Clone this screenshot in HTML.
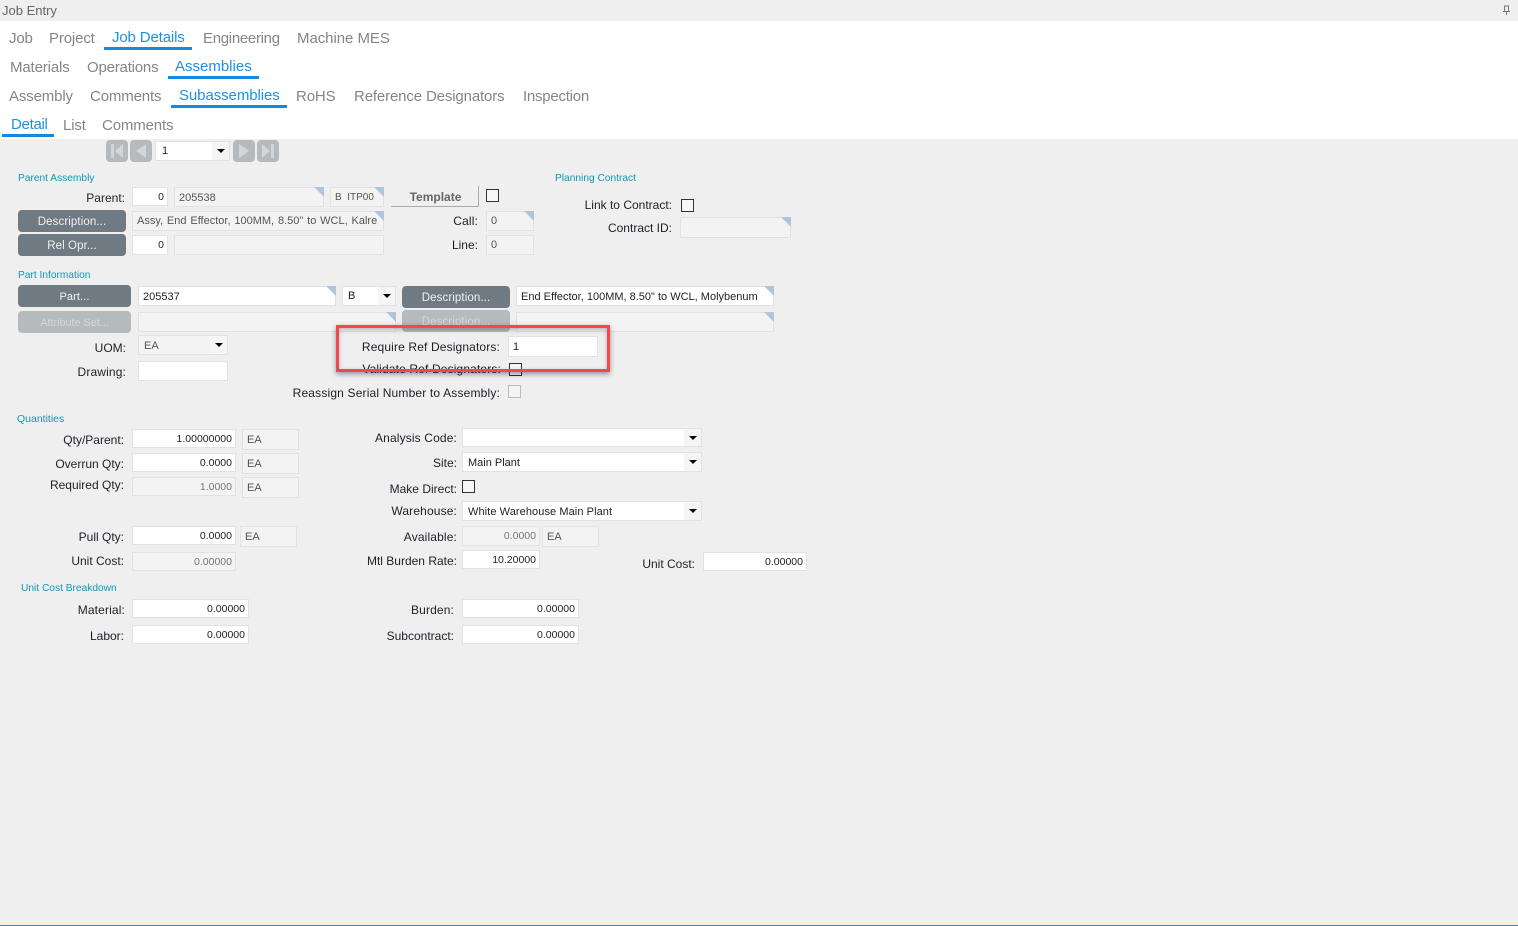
<!DOCTYPE html>
<html><head><meta charset="utf-8"><title>Job Entry</title>
<style>
html,body{margin:0;padding:0}
body{width:1518px;height:926px;position:relative;overflow:hidden;background:#efefef;font-family:"Liberation Sans",sans-serif;color:#222}
div,span{box-sizing:border-box}
.a{position:absolute}
.tab{position:absolute;font-size:15px;line-height:18px;color:#858585;white-space:nowrap;letter-spacing:-.14px}
.on{color:#1e90e4}
.u{position:absolute;height:3px;background:#1489e0}
.g{position:absolute;font-size:10.2px;line-height:12px;color:#1098b4;white-space:nowrap}
.l{position:absolute;font-size:12px;line-height:14px;color:#1e1e2a;white-space:nowrap;text-align:right}
.s{letter-spacing:.14px}
.f{position:absolute;background:#fff;border:1px solid #e2e2e2;font-size:11px;line-height:18px;padding:0 4px;color:#222;white-space:nowrap;overflow:hidden}
.d{background:#f3f3f3;color:#555}
.n{text-align:right;padding-right:3px;font-size:10.5px}
.c{overflow:visible}
.c::after{content:"";position:absolute;right:-1px;top:-1px;border-style:solid;border-width:0 10px 10px 0;border-color:transparent #b0c4de transparent transparent}
.b{position:absolute;background:#6f7a82;border-radius:4px;color:#f2f2f2;font-size:11.5px;letter-spacing:.1px;line-height:24px;text-align:center;white-space:nowrap}
.x{background:#b5babd;color:#d5d8da}
.k{position:absolute;width:13px;height:13px;border:1px solid #333;background:#f6f6f6}
.dd::before{content:"";position:absolute;right:0;top:0;bottom:0;width:17px;background:#f5f5f5}
.dd::after{content:"";position:absolute;right:4px;top:7px;border-style:solid;border-width:4px 4px 0 4px;border-color:#000 transparent transparent transparent}
.v{position:absolute;width:22px;height:22px;background:#b5babd;border-radius:4px}
</style></head><body>
<div class="a" style="left:0;top:21px;width:1518px;height:118px;background:#fff"></div>
<div class="a" style="left:2px;top:3px;font-size:13px;line-height:15px;color:#666">Job Entry</div>
<svg class="a" style="left:1502px;top:5px" width="9" height="11" viewBox="0 0 9 11"><path d="M2 1h5M2.5 1v5M6.5 1v5M1 6.5h7M4.5 6.5V10" stroke="#777" fill="none"/></svg>

<div class="tab" style="left:9px;top:30px">Job</div>
<div class="tab" style="left:49px;top:30px">Project</div>
<div class="tab on" style="left:112px;top:29px">Job Details</div>
<div class="u" style="left:104px;top:47px;width:88px"></div>
<div class="tab" style="left:203px;top:30px;letter-spacing:-.3px">Engineering</div>
<div class="tab" style="left:297px;top:30px;letter-spacing:-.05px">Machine MES</div>

<div class="tab" style="left:10px;top:59px">Materials</div>
<div class="tab" style="left:87px;top:59px;letter-spacing:-.2px">Operations</div>
<div class="tab on" style="left:175px;top:58px;letter-spacing:0">Assemblies</div>
<div class="u" style="left:168px;top:76px;width:91px"></div>

<div class="tab" style="left:9px;top:88px">Assembly</div>
<div class="tab" style="left:90px;top:88px">Comments</div>
<div class="tab on" style="left:179px;top:87px;letter-spacing:-.08px">Subassemblies</div>
<div class="u" style="left:171px;top:105px;width:116px"></div>
<div class="tab" style="left:296px;top:88px">RoHS</div>
<div class="tab" style="left:354px;top:88px">Reference Designators</div>
<div class="tab" style="left:523px;top:88px;letter-spacing:-.24px">Inspection</div>

<div class="tab on" style="left:11px;top:116px;letter-spacing:-.3px">Detail</div>
<div class="u" style="left:2px;top:134px;width:52px"></div>
<div class="tab" style="left:63px;top:117px">List</div>
<div class="tab" style="left:102px;top:117px">Comments</div>

<div class="v" style="left:106px;top:140px"><svg width="22" height="22"><path d="M5 4h3v14H5zM17 4v14L9 11z" fill="#d3d6d8"/></svg></div>
<div class="v" style="left:130px;top:140px"><svg width="22" height="22"><path d="M16 4v14L6 11z" fill="#d3d6d8"/></svg></div>
<div class="f dd" style="left:155px;top:141px;width:75px;height:20px;line-height:18px;padding-left:6px">1</div>
<div class="v" style="left:233px;top:140px"><svg width="22" height="22"><path d="M6 4v14l10-7z" fill="#d3d6d8"/></svg></div>
<div class="v" style="left:257px;top:140px"><svg width="22" height="22"><path d="M5 4v14l8-7zM14 4h3v14h-3z" fill="#d3d6d8"/></svg></div>

<div class="g" style="left:18px;top:173px">Parent Assembly</div>
<div class="l" style="right:1393px;top:191px">Parent:</div>
<div class="f n" style="left:132px;top:187px;width:36px;height:19px">0</div>
<div class="f d c" style="left:174px;top:187px;width:150px;height:20px;line-height:20px">205538</div>
<div class="f d c" style="left:330px;top:187px;width:54px;height:20px;line-height:20px;font-size:10px">B&nbsp; ITP00</div>
<div class="a" style="left:391px;top:186px;width:88px;height:21px;padding-left:2px;border-right:1px solid #aaa;border-bottom:1px solid #aaa;font-size:12px;font-weight:bold;color:#666;text-align:center;line-height:23px">Template</div>
<div class="k" style="left:486px;top:189px"></div>
<div class="b" style="left:18px;top:210px;width:108px;height:22px">Description...</div>
<div class="f d c" style="left:132px;top:211px;width:252px;height:20px;word-spacing:.8px">Assy, End Effector, 100MM, 8.50" to WCL, Kalre</div>
<div class="b" style="left:18px;top:234px;width:108px;height:22px">Rel Opr...</div>
<div class="f n" style="left:132px;top:235px;width:36px;height:20px">0</div>
<div class="f d" style="left:174px;top:235px;width:210px;height:20px"></div>
<div class="l s" style="right:1040px;top:214px">Call:</div>
<div class="f d c" style="left:486px;top:211px;width:48px;height:20px">0</div>
<div class="l" style="right:1040px;top:238px">Line:</div>
<div class="f d" style="left:486px;top:235px;width:48px;height:20px">0</div>

<div class="g" style="left:555px;top:173px">Planning Contract</div>
<div class="l" style="right:846px;top:198px">Link to Contract:</div>
<div class="k" style="left:681px;top:199px"></div>
<div class="l" style="right:846px;top:221px">Contract ID:</div>
<div class="f d c" style="left:680px;top:217px;width:111px;height:21px"></div>

<div class="g" style="left:18px;top:270px">Part Information</div>
<div class="b" style="left:18px;top:285px;width:113px;height:22px;font-size:11px">Part...</div>
<div class="f c" style="left:138px;top:286px;width:198px;height:20px;line-height:20px">205537</div>
<div class="f dd" style="left:342px;top:286px;width:54px;height:20px;padding-left:5px">B</div>
<div class="b" style="left:402px;top:286px;width:108px;height:22px">Description...</div>
<div class="f c" style="left:516px;top:286px;width:258px;height:20px;line-height:20px">End Effector, 100MM, 8.50" to WCL, Molybenum</div>
<div class="b x" style="left:18px;top:311px;width:113px;height:22px;font-size:10.8px;letter-spacing:0">Attribute Set...</div>
<div class="f d c" style="left:138px;top:312px;width:258px;height:20px"></div>
<div class="b x" style="left:402px;top:310px;width:108px;height:22px">Description...</div>
<div class="f d c" style="left:516px;top:312px;width:258px;height:20px"></div>
<div class="l" style="right:1392px;top:341px">UOM:</div>
<div class="f d dd" style="left:138px;top:335px;width:90px;height:20px;padding-left:5px;line-height:20px">EA</div>
<div class="l s" style="right:1392px;top:365px">Drawing:</div>
<div class="f" style="left:138px;top:361px;width:90px;height:20px"></div>

<div class="l s" style="right:1018px;top:340px">Require Ref Designators:</div>
<div class="f" style="left:508px;top:336px;width:90px;height:21px;line-height:20px">1</div>
<div class="l s" style="right:1017px;top:362px">Validate Ref Designators:</div>
<div class="k" style="left:509px;top:363px"></div>
<div class="l" style="right:1018px;top:386px;letter-spacing:.17px">Reassign Serial Number to Assembly:</div>
<div class="k" style="left:508px;top:385px;border-color:#bbb;background:#f3f3f3"></div>
<div class="a" style="left:336px;top:325px;width:274px;height:47px;border:3px solid #f4474b;box-shadow:0 2px 5px rgba(0,0,0,.4), inset 0 2px 5px rgba(0,0,0,.25)"></div>

<div class="g" style="left:17px;top:413px;font-size:10.5px">Quantities</div>
<div class="l" style="right:1394px;top:433px">Qty/Parent:</div>
<div class="f n" style="left:132px;top:429px;width:104px;height:19px">1.00000000</div>
<div class="f d" style="left:242px;top:429px;width:57px;height:21px;line-height:20px">EA</div>
<div class="l" style="right:1394px;top:457px">Overrun Qty:</div>
<div class="f n" style="left:132px;top:453px;width:104px;height:19px">0.0000</div>
<div class="f d" style="left:242px;top:453px;width:57px;height:21px;line-height:20px">EA</div>
<div class="l" style="right:1394px;top:478px">Required Qty:</div>
<div class="f d n" style="left:132px;top:477px;width:104px;height:19px;color:#777">1.0000</div>
<div class="f d" style="left:242px;top:477px;width:57px;height:21px;line-height:20px">EA</div>

<div class="l s" style="right:1061px;top:431px">Analysis Code:</div>
<div class="f dd" style="left:462px;top:428px;width:240px;height:19px"></div>
<div class="l" style="right:1061px;top:456px">Site:</div>
<div class="f dd" style="left:462px;top:452px;width:240px;height:20px;padding-left:5px;line-height:20px">Main Plant</div>
<div class="l" style="right:1061px;top:482px">Make Direct:</div>
<div class="k" style="left:462px;top:480px"></div>
<div class="l s" style="right:1061px;top:504px">Warehouse:</div>
<div class="f dd" style="left:462px;top:501px;width:240px;height:20px;padding-left:5px;line-height:20px;letter-spacing:.08px">White Warehouse Main Plant</div>

<div class="l" style="right:1394px;top:530px">Pull Qty:</div>
<div class="f n" style="left:132px;top:526px;width:104px;height:19px">0.0000</div>
<div class="f d" style="left:240px;top:526px;width:57px;height:21px;line-height:20px">EA</div>
<div class="l" style="right:1394px;top:554px">Unit Cost:</div>
<div class="f d n" style="left:132px;top:552px;width:104px;height:19px;color:#777">0.00000</div>
<div class="l s" style="right:1061px;top:530px">Available:</div>
<div class="f d n" style="left:462px;top:526px;width:78px;height:20px;color:#777">0.0000</div>
<div class="f d" style="left:542px;top:526px;width:57px;height:21px;line-height:20px">EA</div>
<div class="l" style="right:1061px;top:554px">Mtl Burden Rate:</div>
<div class="f n" style="left:462px;top:550px;width:78px;height:19px">10.20000</div>
<div class="l" style="right:823px;top:557px">Unit Cost:</div>
<div class="f n" style="left:703px;top:552px;width:104px;height:19px">0.00000</div>

<div class="g" style="left:21px;top:583px">Unit Cost Breakdown</div>
<div class="l s" style="right:1393px;top:603px">Material:</div>
<div class="f n" style="left:132px;top:599px;width:117px;height:19px">0.00000</div>
<div class="l" style="right:1394px;top:629px">Labor:</div>
<div class="f n" style="left:132px;top:625px;width:117px;height:19px">0.00000</div>
<div class="l s" style="right:1064px;top:603px">Burden:</div>
<div class="f n" style="left:462px;top:599px;width:117px;height:19px">0.00000</div>
<div class="l" style="right:1064px;top:629px">Subcontract:</div>
<div class="f n" style="left:462px;top:625px;width:117px;height:19px">0.00000</div>

<div class="a" style="left:0;top:925px;width:1518px;height:1px;background:#2a8fc0"></div>
</body></html>
